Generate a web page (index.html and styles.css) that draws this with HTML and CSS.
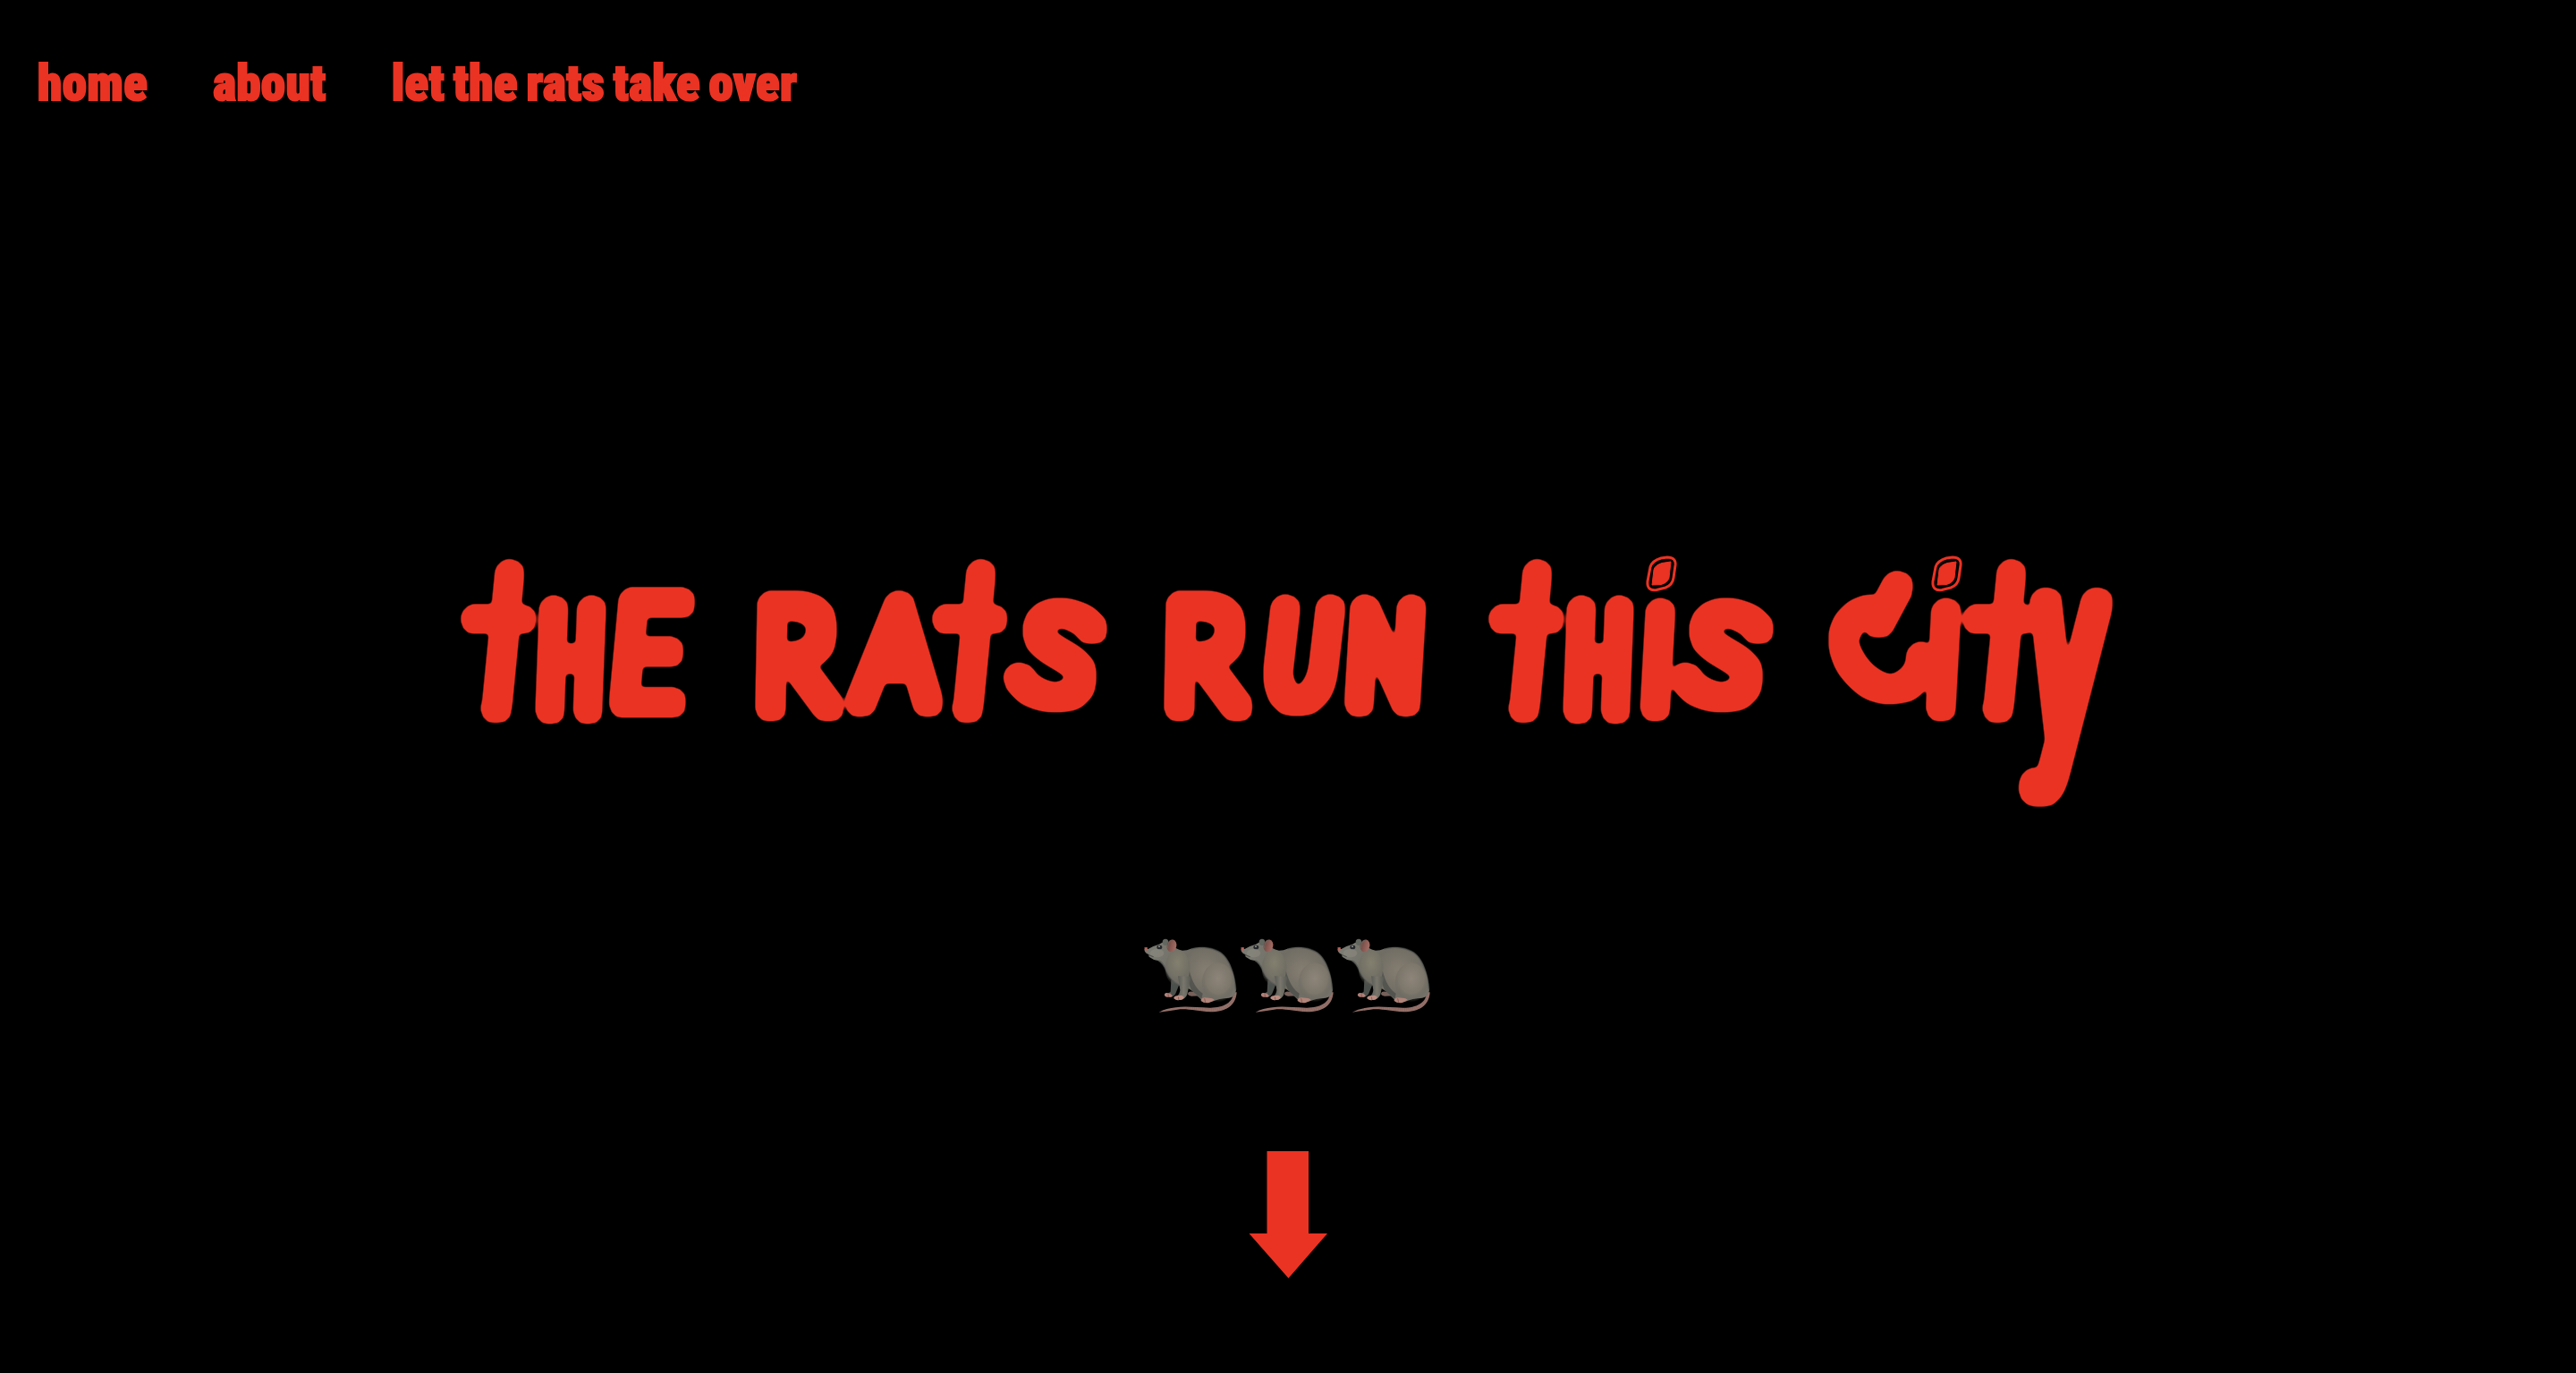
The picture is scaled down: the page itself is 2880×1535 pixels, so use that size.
FILE: index.html
```html
<!DOCTYPE html>
<html lang="en">
<head>
<meta charset="utf-8">
<title>the rats run this city</title>
<link rel="stylesheet" href="styles.css">
</head>
<body>
<nav class="nav">
  <a class="nav-link" href="#">home</a>
  <a class="nav-link" href="#">about</a>
  <a class="nav-link" href="#">let the rats take over</a>
</nav>
<main class="hero">
  <h1 class="title">
    <svg class="title-art" viewBox="500 540 1880 460">
      <defs>
        <filter id="cross" filterUnits="userSpaceOnUse" primitiveUnits="userSpaceOnUse" x="-10" y="-90" width="60" height="84.500">
          <feFlood x="14.200" y="-42" width="36" height="60" flood-color="#fff" result="hook"/>
          <feComposite in="SourceGraphic" in2="hook" operator="out" x="-10" y="-90" width="60" height="84.500"/>
        </filter>
        <filter id="stem" filterUnits="userSpaceOnUse" x="-10" y="-53" width="60" height="63"><feOffset dx="0" dy="0"/></filter>
        <filter id="marker" filterUnits="userSpaceOnUse" x="500" y="600" width="1880" height="320" color-interpolation-filters="sRGB">
          <feMorphology operator="dilate" radius="4" result="m"/>
          <feOffset in="m" dx="11" dy="0" result="a"/>
          <feOffset in="m" dx="9.5" dy="5.5" result="b"/>
          <feOffset in="m" dx="5.5" dy="9.5" result="c"/>
          <feOffset in="m" dx="0" dy="11" result="d"/>
          <feOffset in="m" dx="-5.5" dy="9.5" result="e"/>
          <feOffset in="m" dx="-9.5" dy="5.5" result="f"/>
          <feOffset in="m" dx="-11" dy="0" result="g"/>
          <feOffset in="m" dx="-9.5" dy="-5.5" result="h"/>
          <feOffset in="m" dx="-5.5" dy="-9.5" result="i"/>
          <feOffset in="m" dx="0" dy="-11" result="j"/>
          <feOffset in="m" dx="5.5" dy="-9.5" result="k"/>
          <feOffset in="m" dx="9.5" dy="-5.5" result="l"/>
          <feMerge><feMergeNode in="m"/><feMergeNode in="a"/><feMergeNode in="b"/><feMergeNode in="c"/><feMergeNode in="d"/><feMergeNode in="e"/><feMergeNode in="f"/><feMergeNode in="g"/><feMergeNode in="h"/><feMergeNode in="i"/><feMergeNode in="j"/><feMergeNode in="k"/><feMergeNode in="l"/></feMerge>
          <feGaussianBlur stdDeviation="2"/>
          <feComponentTransfer result="shape"><feFuncA type="linear" slope="4" intercept="-1.5"/></feComponentTransfer>
          <feFlood flood-color="#eb3323"/>
          <feComposite in2="shape" operator="in"/>
        </filter>
      </defs>
      <g class="letters" filter="url(#marker)">
        <g><text class="fine" filter="url(#cross)" transform="matrix(-2 0 -.24 2.45 579 806)">t</text><text transform="matrix(.84 0 -.06 1.59 604.4 793)">H</text><text transform="matrix(1.3 0 -.15 1.62 682 786)">E</text></g>
        <g><text transform="matrix(1.47 0 -.03 1.62 843.5 790)">R</text><text transform="matrix(1.3 0 -.08 1.55 958 785)">A</text><text class="fine" filter="url(#cross)" transform="matrix(-2 0 -.24 2.45 1106 806)">t</text><text transform="translate(1181 732) rotate(16) scale(1.68 1.35) translate(-25.8 35)">S</text></g>
        <g><text transform="matrix(1.47 0 -.03 1.62 1300.5 790)">R</text><text transform="matrix(1.02 0 -.17 1.46 1413.5 782.6)">U</text><text transform="matrix(1.03 0 -.09 1.49 1507 785)">N</text></g>
        <g><text class="fine" filter="url(#cross)" transform="matrix(-2 0 -.24 2.45 1728 806)">t</text><text transform="matrix(.84 0 -.06 1.59 1753.4 793)">H</text><text class="fine" filter="url(#stem)" transform="matrix(2 0 -.12 2.18 1829.6 791)">i</text><text transform="translate(1926 732) rotate(16) scale(1.68 1.35) translate(-25.8 35)">S</text></g>
        <g><text transform="translate(2101 729) rotate(-42) scale(1.15 1.35) translate(-36 35)">C</text><path class="tick" d="M2122 654L2099 697"/><text class="fine" filter="url(#stem)" transform="matrix(2 0 -.12 2.18 2149 791)">i</text><text class="fine" filter="url(#cross)" transform="matrix(-2 0 -.24 2.45 2258 806)">t</text><text class="inter" transform="matrix(1.35 0 -.2 2.79 2268 826.6)">y</text></g>
      </g>
      <g id="spot">
        <path class="ring" d="M1845 634Q1847 627 1857 624L1864 623Q1874 623 1873 632L1871 646Q1870 654 1862 657L1852 659.500Q1841 661 1842 650Z"/>
        <path class="core" d="M1849 637Q1850 632 1858 629.500L1868 628L1866 646Q1864 652 1857 653.500L1847 654Z"/>
      </g>
      <use href="#spot" x="319"/>
    </svg>
  </h1>
  <div class="rats">
    <svg class="rat" viewBox="54 0 324 360">
      <defs>
        <radialGradient id="body" gradientUnits="userSpaceOnUse" cx="265" cy="165" r="200"><stop offset="0" stop-color="#857d71"/><stop offset=".4" stop-color="#706d64"/><stop offset="1" stop-color="#7b7b73"/></radialGradient>
        <radialGradient id="haunch" cx=".5" cy=".4" r=".6"><stop offset="0" stop-color="#8e8579"/><stop offset=".65" stop-color="#7c766b"/><stop offset="1" stop-color="#65645d" stop-opacity="0"/></radialGradient>
        <radialGradient id="chest" cx=".5" cy=".35" r=".65"><stop offset="0" stop-color="#83806f"/><stop offset=".6" stop-color="#747166"/><stop offset="1" stop-color="#62635c" stop-opacity="0"/></radialGradient>
        <linearGradient id="leg" x1="0" x2="1"><stop offset="0" stop-color="#50534f"/><stop offset=".5" stop-color="#79766c"/><stop offset="1" stop-color="#565852"/></linearGradient>
        <linearGradient id="ear" x1="0" x2="1"><stop offset="0" stop-color="#6d4842"/><stop offset="1" stop-color="#a66e65"/></linearGradient>
        <g id="rat-art">
          <path d="M356 238C358 274 320 291 277 290C230 289 195 284 164 289Q132 292 107 305Q142 300 169 296C205 292 235 302 280 304C331 304 366 283 368 238Z" fill="#94716a"/>
          <path d="M198 290L277 297Q345 296 362 247" fill="none" stroke="#5e403c" stroke-width="11" stroke-dasharray="1 6" opacity=".35"/>
          <path d="M204 243Q205 234 220 236L254 240L250 250L216 251Q205 250 204 243Z" fill="#77605a"/>
          <path d="M148 197L146 236Q137 242 130 247L145 254Q158 252 163 242L176 210Z" fill="#4c504c"/>
          <path d="M126 249Q124 241 133 240L146 242L153 251Q146 256 138 254Q129 256 126 249Z" fill="#b18078"/>
          <path d="M71 93Q91 81 108 77Q124 64 145 76Q164 95 186 98Q202 98 214 92C250 81 289 88 314 104C345 125 363 180 366 230Q364 253 342 257Q309 258 282 271L251 265L219 234Q200 220 177 216Q148 203 132 168Q119 138 104 132Q88 130 74 119L72 111Q58 105 58 92Z" fill="url(#body)"/>
          <path d="M209 166Q224 224 254 242L250 262L216 231Q202 206 209 166Z" fill="#3c403e" opacity=".55"/>
          <path d="M214 93C250 82 289 89 314 105C344 126 362 180 365 230" fill="none" stroke="#454a47" stroke-width="5" opacity=".5"/>
          <path d="M106 132Q120 138 133 168Q148 203 176 215" fill="none" stroke="#454a47" stroke-width="6" opacity=".5"/>
          <ellipse cx="306" cy="205" rx="55" ry="66" fill="url(#haunch)"/>
          <ellipse cx="170" cy="157" rx="42" ry="60" fill="url(#chest)"/>
          <path d="M171 184L178 231Q177 245 165 253L179 263Q195 262 202 245L215 185Z" fill="url(#leg)"/>
          <path d="M157 259Q156 251 168 250L181 248Q191 250 191 257Q185 266 175 264Q166 267 157 259Z" fill="#b98c81"/>
          <path d="M248 267Q247 258 260 256L275 257Q291 258 293 264L276 273Q258 276 248 267Z" fill="#b18479"/>
          <path d="M260 259L263 272M172 254L174 264M138 244L139 254" stroke="#6f4843" stroke-width="2"/>
          <ellipse cx="129" cy="70" rx="10" ry="11" fill="#626760"/>
          <ellipse cx="150" cy="82" rx="16" ry="21" transform="rotate(14 150 82)" fill="url(#ear)"/>
          <path d="M137 91Q136 68 151 64" fill="none" stroke="#6c6761" stroke-width="3"/>
          <ellipse cx="109" cy="87" rx="9" ry="7" fill="#25282a"/><circle cx="108" cy="85" r="2.200" fill="#ddd"/>
          <ellipse cx="101" cy="107" rx="23" ry="14" fill="#969388" opacity=".4"/>
          <path d="M58 88L68 87L69 96L61 99Z" fill="#b5655b"/>
          <path d="M70 111Q79 116 89 119" fill="none" stroke="#34302d" stroke-width="2"/>
        </g>
      </defs>
      <use href="#rat-art"/>
    </svg><svg class="rat" viewBox="54 0 324 360"><use href="#rat-art"/></svg><svg class="rat" viewBox="54 0 324 360"><use href="#rat-art"/></svg>
  </div>
  <a class="down" href="#"><svg class="arrow" viewBox="0 0 88 142"><path d="M20.500 0H67V92H88L44.500 142L.5 92H20.500Z"/></svg></a>
</main>
</body>
</html>
```
FILE: styles.css
```css
* { box-sizing: border-box; }
body { margin: 0; min-height: 1535px; background: #000; color: #eb3323; }
.nav { display: flex; gap: 73px; height: 140px; padding: 61px 0 0 42px; font: 900 55px/64px Roboto, sans-serif; font-stretch: 75%; letter-spacing: .4px; word-spacing: -3.5px; }
.nav-link { color: inherit; text-decoration: none; -webkit-text-stroke: 2px #eb3323; }
.hero { display: flex; flex-direction: column; align-items: center; padding-top: 400px; }
.title { margin: 0; line-height: 0; }
.title-art { width: 1880px; height: 460px; overflow: visible; }
.letters { font: 100 100px Lato, sans-serif; fill: #fff; stroke: #fff; stroke-width: 1.6px; stroke-linejoin: round; }
.letters .inter { font-family: Inter, sans-serif; }
.letters .fine { stroke-width: .3px; }
.letters .tick { stroke-width: 4px; }
.ring { fill: none; stroke: #eb3323; stroke-width: 3px; }
.core { fill: #eb3323; stroke: #eb3323; stroke-width: 1px; stroke-linejoin: round; }
.rats { display: flex; margin-top: 30px; }
.rat { width: 108px; height: 120px; }
.down { margin-top: 137px; line-height: 0; }
.arrow { width: 88px; height: 142px; fill: #eb3323; }
```
